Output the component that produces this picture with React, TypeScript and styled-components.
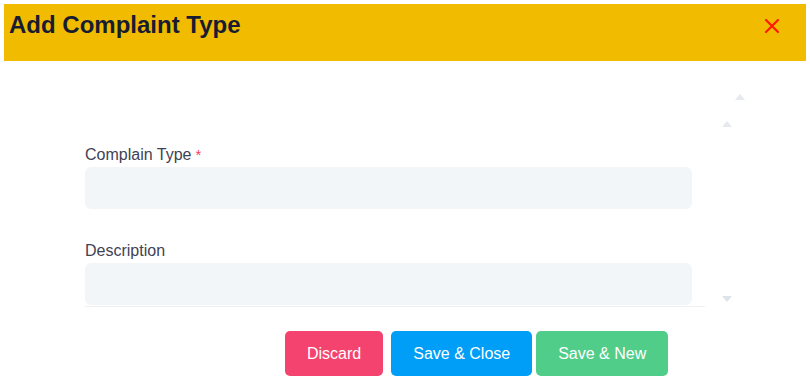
import React from "react";
import styled, { createGlobalStyle } from "styled-components";

const GlobalStyle = createGlobalStyle`
  body {
    margin: 0;
    background: #ffffff;
    font-family: "Liberation Sans", Arial, sans-serif;
  }
`;

const App: React.FC = () => {
  return (
    <Modal>
      <GlobalStyle />
      <Header>
        <Title>Add Complaint Type</Title>
        <Close aria-label="close">
          <svg width="16" height="16" viewBox="0 0 16 16">
            <path d="M2 2 L14 14 M14 2 L2 14" stroke="#ff1a00" strokeWidth="2.2" strokeLinecap="round" />
          </svg>
        </Close>
      </Header>
      <Body>
        <Panel>
          <Label>
            Complain Type<Required>*</Required>
          </Label>
          <Input />
          <Label $spaced>Description</Label>
          <Input />
        </Panel>
        <Track $offset={17} $top={60} $bottom={5}>
          <Arrow />
          <Arrow $down />
        </Track>
        <Track $offset={3} $top={33} $bottom={0}>
          <Arrow />
        </Track>
      </Body>
      <Footer>
        <Button $bg="#f3436e">Discard</Button>
        <Button $bg="#009ef7" $gap={8}>Save &amp; Close</Button>
        <Button $bg="#50cd89" $gap={4}>Save &amp; New</Button>
      </Footer>
    </Modal>
  );
};

export default App;

const Modal = styled.div`
  width: 810px;
  height: 390px;
  padding: 4px 4px 0 4px;
  box-sizing: border-box;
  background: #ffffff;
`;
const Header = styled.div`
  height: 57px;
  background-color: #f1bc00;
  display: flex;
  align-items: flex-start;
  justify-content: space-between;
  padding: 0 26px 0 5px;
`;
const Title = styled.h2`
  margin: 9px 0 0 0;
  font-size: 24px;
  font-weight: 700;
  line-height: 24px;
  color: #181c32;
`;
const Close = styled.div`
  margin-top: 14px;
  width: 16px;
  height: 16px;
  display: flex;
`;
const Body = styled.div`
  height: 246px;
  display: flex;
  padding-left: 81px;
`;
const Panel = styled.div`
  width: 620px;
  padding-top: 84px;
  box-sizing: border-box;
  border-bottom: 1px solid #eef1f4;
  display: flex;
  flex-direction: column;
  padding-right: 13px;
`;
const Label = styled.label<{ $spaced?: boolean }>`
  font-size: 16px;
  line-height: 20px;
  color: #3f4254;
  margin-top: ${(p) => (p.$spaced ? "32px" : "0")};
  margin-bottom: 2px;
`;
const Required = styled.span`
  color: #f1416c;
  margin-left: 4px;
  font-size: 15px;
`;
const Input = styled.div`
  height: 42px;
  border-radius: 6px;
  background: #f3f6f9;
`;
const Track = styled.div<{ $offset: number; $top: number; $bottom: number }>`
  width: 10px;
  margin-left: ${(p) => p.$offset}px;
  padding: ${(p) => `${p.$top}px 0 ${p.$bottom}px`};
  display: flex;
  flex-direction: column;
  justify-content: space-between;
  align-items: center;
`;
const Arrow = styled.div<{ $down?: boolean }>`
  width: 0;
  height: 0;
  border-left: 5px solid transparent;
  border-right: 5px solid transparent;
  ${(p) =>
    p.$down
      ? "border-top: 6px solid #dfe4ea;"
      : "border-bottom: 6px solid #e6eaee;"}
`;
const Footer = styled.div`
  display: flex;
  padding: 24px 0 0 281px;
`;
const Button = styled.button<{ $bg: string; $gap?: number }>`
  height: 45px;
  padding: 0 22px;
  margin-left: ${(p) => p.$gap ?? 0}px;
  border: none;
  border-radius: 5px;
  background-color: ${(p) => p.$bg};
  color: #ffffff;
  font-family: "Liberation Sans", Arial, sans-serif;
  font-size: 16px;
  cursor: pointer;
`;
